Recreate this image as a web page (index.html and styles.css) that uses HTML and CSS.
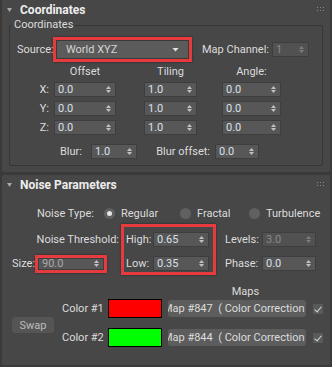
FILE: index.html
```html
<!DOCTYPE html>
<html lang="en">
<head>
    <meta charset="UTF-8">
    <meta name="viewport" content="width=device-width, initial-scale=1.0">
    <title>Coordinates - Noise Parameters</title>
    <link rel="stylesheet" href="styles.css">
</head>
<body>
    <div class="rollout">
        <div class="rollout-head">
            <span class="twisty"></span>
            <span class="rollout-title">Coordinates</span>
            <span class="grip"><i></i><i></i><i></i><i></i><i></i><i></i></span>
        </div>
        <fieldset class="group">
            <legend>Coordinates</legend>
            <div class="source-row">
                <span class="lbl source-lbl">Source:</span>
                <div class="hl hl-source">
                    <div class="dropdown"><span>World XYZ</span><i class="caret"></i></div>
                </div>
                <span class="lbl map-ch">Map Channel:</span>
                <div class="spin dis w37"><span>1</span><i class="arr"></i></div>
            </div>
            <div class="xyz xyz-head">
                <span></span>
                <span class="colhead w62">Offset</span>
                <span class="colhead w53">Tiling</span>
                <span class="colhead w59">Angle:</span>
            </div>
            <div class="xyz xyz-rows">
                <span class="axis">X:</span>
                <div class="spin w62"><span>0.0</span><i class="arr"></i></div>
                <div class="spin w53"><span>1.0</span><i class="arr"></i></div>
                <div class="spin w59"><span>0.0</span><i class="arr"></i></div>
                <span class="axis">Y:</span>
                <div class="spin w62"><span>0.0</span><i class="arr"></i></div>
                <div class="spin w53"><span>1.0</span><i class="arr"></i></div>
                <div class="spin w59"><span>0.0</span><i class="arr"></i></div>
                <span class="axis">Z:</span>
                <div class="spin w62"><span>0.0</span><i class="arr"></i></div>
                <div class="spin w53"><span>1.0</span><i class="arr"></i></div>
                <div class="spin w59"><span>0.0</span><i class="arr"></i></div>
            </div>
            <div class="blur-row">
                <span class="lbl blur-lbl">Blur:</span>
                <div class="spin w46"><span>1.0</span><i class="arr"></i></div>
                <span class="lbl blur-off-lbl">Blur offset:</span>
                <div class="spin w44"><span>0.0</span><i class="arr"></i></div>
            </div>
        </fieldset>
    </div>

    <div class="rollout noise">
        <div class="rollout-head">
            <span class="twisty"></span>
            <span class="rollout-title">Noise Parameters</span>
            <span class="grip"><i></i><i></i><i></i><i></i><i></i><i></i></span>
        </div>
        <div class="type-row">
            <span class="lbl type-lbl">Noise Type:</span>
            <label class="radio r-regular"><i class="dot on"></i>Regular</label>
            <label class="radio r-fractal"><i class="dot"></i>Fractal</label>
            <label class="radio"><i class="dot"></i>Turbulence</label>
        </div>
        <div class="threshold">
            <div class="th-left">
                <span class="lbl th-lbl">Noise Threshold:</span>
                <div class="size-row">
                    <span class="lbl size-lbl">Size:</span>
                    <div class="hl hl-size">
                        <div class="spin w66 tall"><span>90.0</span><i class="arr"></i></div>
                    </div>
                </div>
            </div>
            <div class="hl hl-hilo">
                <div class="pair">
                    <span class="lbl pair-lbl">High:</span>
                    <div class="spin w56"><span>0.65</span><i class="arr"></i></div>
                </div>
                <div class="pair">
                    <span class="lbl pair-lbl">Low:</span>
                    <div class="spin w56"><span>0.35</span><i class="arr"></i></div>
                </div>
            </div>
            <div class="th-right">
                <div class="pair">
                    <span class="lbl right-lbl">Levels:</span>
                    <div class="spin dis w54"><span>3.0</span><i class="arr"></i></div>
                </div>
                <div class="pair">
                    <span class="lbl right-lbl">Phase:</span>
                    <div class="spin w54"><span>0.0</span><i class="arr"></i></div>
                </div>
            </div>
        </div>
        <div class="maps">
            <span class="maps-lbl">Maps</span>
            <button class="swap">Swap</button>
            <span class="lbl color-lbl c1">Color #1</span>
            <span class="swatch red c1"></span>
            <button class="map-btn c1"><span>Map #847  ( Color Correction )</span></button>
            <span class="check c1"></span>
            <span class="lbl color-lbl c2">Color #2</span>
            <span class="swatch green c2"></span>
            <button class="map-btn c2"><span>Map #844  ( Color Correction )</span></button>
            <span class="check c2"></span>
        </div>
    </div>
</body>
</html>
```

FILE: styles.css
```css
* {
    box-sizing: border-box;
}

body {
    margin: 0;
    width: 332px;
    height: 367px;
    overflow: hidden;
    background-color: #3a3a3a;
    font-family: Roboto, "Liberation Sans", sans-serif;
    font-size: 11px;
    color: #dcdcdc;
}

.rollout {
    display: flow-root;
    margin: 0 2px;
    background-color: #474747;
    border-radius: 2px;
}

.rollout + .rollout {
    margin-top: 3px;
}

.rollout-head {
    display: flex;
    align-items: center;
    height: 20px;
    padding: 0 6px 0 5px;
}

.twisty {
    width: 5px;
    height: 4px;
    margin-right: 8px;
    background-color: #a8a8a8;
    clip-path: polygon(0 0, 100% 0, 50% 100%);
}

.rollout-title {
    flex: 1;
    font-size: 12px;
    font-weight: 700;
    color: #ededed;
}

.grip {
    display: grid;
    grid-template-columns: repeat(3, 1px);
    gap: 2px;
    margin-top: -2px;
}

.grip i {
    width: 1px;
    height: 1px;
    background-color: #8c8c8c;
}

/* group box */
.group {
    margin: -2px 7px 6px;
    padding: 0 0 6px;
    min-width: 0;
    border: 1px solid #363636;
    border-radius: 2px;
}

.group legend {
    margin-left: 2px;
    padding: 0 2px;
    line-height: 14px;
}

.lbl {
    line-height: 15px;
    white-space: nowrap;
}

/* red highlight frames */
.hl {
    border: 3px solid #e63a3f;
    box-shadow: 0 0 2px rgba(0, 0, 0, 0.5);
}

/* spinners */
.spin {
    display: flex;
    align-items: center;
    justify-content: space-between;
    height: 15px;
    padding: 0 4px 0 3px;
    background-color: #575757;
    border: 1px solid #3e3e3e;
    color: #dbe0ea;
    line-height: 13px;
}

.spin.dis {
    background-color: #515151;
    color: #8a8a8a;
}

.spin.tall {
    height: 12px;
    color: #a9a9a9;
}

.arr {
    display: flex;
    flex-direction: column;
    gap: 1px;
}

.arr::before,
.arr::after {
    content: "";
    width: 5px;
    height: 3px;
    background-color: #c2c2c2;
}

.arr::before {
    clip-path: polygon(50% 0, 100% 100%, 0 100%);
}

.arr::after {
    clip-path: polygon(0 0, 100% 0, 50% 100%);
}

.spin.dis .arr::before,
.spin.dis .arr::after {
    background-color: #7c7c7c;
}

.w37 { width: 37px; }
.w44 { width: 44px; }
.w46 { width: 46px; }
.w53 { width: 53px; }
.w54 { width: 54px; }
.w56 { width: 56px; }
.w59 { width: 59px; }
.w62 { width: 62px; }
.w66 { width: 66px; }

/* source row */
.source-row {
    display: flex;
    align-items: center;
    height: 25px;
    margin-top: 5px;
    padding-left: 7px;
}

.source-lbl {
    width: 36px;
}

.hl-source {
    width: 139px;
    height: 25px;
}

.dropdown {
    display: flex;
    align-items: center;
    justify-content: space-between;
    height: 19px;
    padding: 0 9px 0 9px;
    background-color: #5b5b5b;
    border: 1px solid #3a3a3a;
    color: #d4d4d4;
}

.caret {
    width: 7px;
    height: 4px;
    background-color: #e2e2e2;
    clip-path: polygon(0 0, 100% 0, 50% 100%);
}

.map-ch {
    width: 66px;
    margin: 0 4px 0 10px;
}

/* offset / tiling / angle table */
.xyz {
    display: grid;
    grid-template-columns: 44px 90px 78px 59px;
}

.xyz-head {
    height: 14px;
    margin-top: 3px;
    line-height: 14px;
}

.colhead {
    text-align: center;
}

.xyz-rows {
    grid-auto-rows: 15px;
    row-gap: 4px;
    margin-top: 3px;
}

.axis {
    padding-right: 5px;
    text-align: right;
    line-height: 15px;
}

.blur-row {
    display: flex;
    align-items: center;
    height: 15px;
    margin-top: 9px;
}

.blur-lbl {
    width: 72px;
    margin-right: 9px;
    text-align: right;
}

.blur-off-lbl {
    width: 73px;
    margin-right: 5px;
    text-align: right;
}

/* noise parameters */
.noise {
    padding-bottom: 18px;
}

.type-row {
    display: flex;
    align-items: center;
    height: 16px;
    margin-top: 10px;
    padding-left: 35px;
}

.type-lbl {
    width: 67px;
}

.radio {
    display: flex;
    align-items: center;
}

.r-regular {
    width: 76px;
}

.r-fractal {
    width: 69px;
}

.dot {
    display: flex;
    align-items: center;
    justify-content: center;
    width: 11px;
    height: 11px;
    margin-right: 6px;
    border-radius: 50%;
    background-color: #606060;
}

.dot.on::after {
    content: "";
    width: 5px;
    height: 5px;
    border-radius: 50%;
    background-color: #e6e6e6;
}

.threshold {
    display: flex;
    height: 51px;
    margin-top: 3px;
}

.th-left,
.th-right {
    display: flex;
    flex-direction: column;
    gap: 9px;
    padding-top: 8px;
}

.th-left {
    width: 119px;
}

.th-lbl {
    padding-right: 2px;
    text-align: right;
}

.size-row {
    display: flex;
    align-items: center;
    height: 15px;
    padding-left: 10px;
}

.size-lbl {
    width: 23px;
}

.hl-size {
    width: 72px;
    height: 18px;
}

.hl-hilo {
    display: flex;
    flex-direction: column;
    gap: 9px;
    width: 95px;
    padding: 5px 0 0 2px;
}

.pair {
    display: flex;
    align-items: center;
    height: 15px;
}

.pair-lbl {
    width: 27px;
}

.th-right {
    margin-left: 9px;
}

.right-lbl {
    width: 37px;
}

/* maps */
.maps {
    display: grid;
    grid-template-columns: 60px 46px 54px 6px 138px 7px 10px;
    grid-template-rows: 14px 19px 10px 19px;
    margin-top: 10px;
}

.maps-lbl {
    grid-column: 5 / 8;
    grid-row: 1;
    text-align: center;
    line-height: 14px;
}

.swap {
    grid-column: 1;
    grid-row: 2 / 5;
    align-self: start;
    width: 42px;
    height: 16px;
    margin: 18px 0 0 10px;
    padding: 0;
    border: none;
    border-radius: 3px;
    background-color: #555555;
    color: #bdbdbd;
    font: inherit;
}

.c1 {
    grid-row: 2;
}

.c2 {
    grid-row: 4;
}

.color-lbl {
    grid-column: 2;
    align-self: center;
}

.swatch {
    grid-column: 3;
    border: 1px solid #000;
}

.swatch.red {
    background-color: #ff0000;
}

.swatch.green {
    background-color: #00ff00;
}

.map-btn {
    grid-column: 5;
    display: flex;
    justify-content: center;
    align-self: center;
    height: 17px;
    padding: 0;
    overflow: hidden;
    border: none;
    border-radius: 3px;
    background-color: #5d5d5d;
    color: #dcdcdc;
    font: inherit;
    line-height: 17px;
}

.map-btn span {
    flex: none;
    white-space: pre;
}

.check {
    grid-column: 7;
    align-self: center;
    width: 10px;
    height: 10px;
    background-color: #5a5a5a;
    position: relative;
}

.check::after {
    content: "";
    position: absolute;
    left: 3px;
    top: 1px;
    width: 3px;
    height: 6px;
    border: solid #d8d8d8;
    border-width: 0 1.5px 1.5px 0;
    transform: rotate(40deg);
}
```
